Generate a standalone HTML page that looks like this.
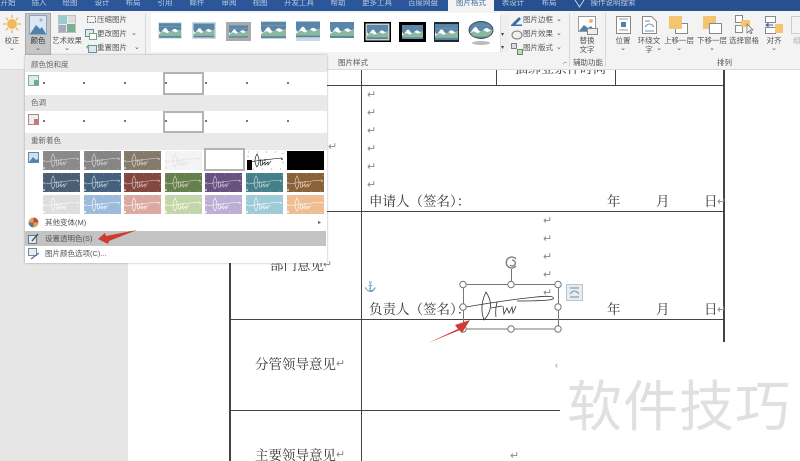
<!DOCTYPE html>
<html><head><meta charset="utf-8"><style>
html,body{margin:0;padding:0;width:800px;height:461px;overflow:hidden;background:#fff}
body{position:relative;font-family:"Liberation Sans","Noto Sans CJK SC",sans-serif;color:#444}
div,span,svg{position:absolute}
.t{white-space:nowrap;line-height:1;filter:blur(.3px)}
.tab{color:#b9c9e2;font-size:7.5px;line-height:1;top:-1.5px;white-space:nowrap;filter:blur(.3px);transform:translateX(-50%)}
.r{font-size:7.5px;color:#555;white-space:nowrap;line-height:1;filter:blur(.25px)}
.c{transform:translateX(-50%);text-align:center}
.ch{font-size:7px}
.doc{font-family:"Liberation Serif","Noto Serif CJK SC",serif;color:#333;font-size:13.5px;white-space:nowrap;line-height:1;filter:blur(.25px)}
.ret{font-size:11px;color:#888;line-height:1;white-space:nowrap}
.l{background:#444}
.th{width:37px;height:19px;overflow:hidden;filter:blur(.3px)}
.h{background:#e9e9e9;left:0;width:302px}
.dot{width:1.5px;height:1.5px;background:#777}
</style></head><body>
<svg width="0" height="0" style="left:0;top:0"><defs>
<symbol id="pic" viewBox="0 0 24 16"><rect width="24" height="16" fill="#fff"/><rect width="24" height="4" fill="#5a86a8"/><path d="M0 4h24v3q-3 2-5 0t-5 1-5-1-5 1-4-1z" fill="#5a86a8"/><path d="M0 12l5-3 4 2 5-3 4 2 6-3v8H0z" fill="#8db8a0"/><rect y="14" width="24" height="2" fill="#5a86a8"/></symbol>
<symbol id="sig" viewBox="0 0 37 19" preserveAspectRatio="none"><g fill="none" stroke="currentColor" stroke-width=".6"><path d="M2 11q12-2 33-4"/><path d="M10 3q-4 7 0 13 4-6 0-13zM14 8q-1 4 0 7M16 9l-1 5 3-3v3l3-3v3l3-4"/><path d="M1 1h35v17H1z" stroke-dasharray="1 8" opacity=".7"/></g><g fill="currentColor"><circle cx="1" cy="17" r="1"/><circle cx="1" cy="10" r=".8"/><circle cx="18" cy="9" r=".8"/><circle cx="35" cy="8" r=".8"/></g></symbol>
</defs></svg>

<!-- Document -->
<div style="left:0;top:70px;width:128px;height:391px;background:#e6e6e6"></div>
<div class="l" style="left:229px;top:70px;width:2px;height:391px"></div>
<div class="l" style="left:361px;top:70px;width:1px;height:391px"></div>
<div class="l" style="left:496px;top:70px;width:1px;height:15px"></div>
<div class="l" style="left:615px;top:70px;width:1px;height:15px"></div>
<div class="l" style="left:723px;top:70px;width:2px;height:272px"></div>
<div class="l" style="left:230px;top:85px;width:494px;height:1px"></div>
<div class="l" style="left:230px;top:211px;width:494px;height:1px"></div>
<div class="l" style="left:230px;top:319px;width:494px;height:1px"></div>
<div class="l" style="left:230px;top:410px;width:330px;height:1px"></div>

<div class="doc" style="left:515px;top:62px;font-size:13px">捆绑业条件时间</div>
<div style="left:128px;top:55px;width:672px;height:15px;background:#f3f3f3"></div>

<div class="ret" style="left:367px;top:90px">↵</div>
<div class="ret" style="left:367px;top:108px">↵</div>
<div class="ret" style="left:367px;top:126px">↵</div>
<div class="ret" style="left:367px;top:144px">↵</div>
<div class="ret" style="left:367px;top:162px">↵</div>
<div class="ret" style="left:367px;top:180px">↵</div>
<div class="ret" style="left:328px;top:142px">↵</div>
<div class="doc" style="left:369px;top:195px">申请人（签名）：</div>
<div class="doc" style="left:607px;top:195px">年</div>
<div class="doc" style="left:656px;top:195px">月</div>
<div class="doc" style="left:704px;top:195px">日<span class="ret" style="left:13px;top:2px">↵</span></div>

<div class="ret" style="left:543px;top:216px">↵</div>
<div class="ret" style="left:543px;top:234px">↵</div>
<div class="ret" style="left:543px;top:252px">↵</div>
<div class="ret" style="left:543px;top:270px">↵</div>
<div class="ret" style="left:543px;top:288px">↵</div>
<div class="doc" style="left:270px;top:259px">部门意见<span class="ret" style="left:53px;top:1px">↵</span></div>
<div class="t" style="left:364px;top:283px;font-size:10px;color:#3f6f9c">⚓</div>
<div class="doc" style="left:369px;top:303px">负责人（签名）：</div>
<div class="doc" style="left:607px;top:303px">年</div>
<div class="doc" style="left:656px;top:303px">月</div>
<div class="doc" style="left:704px;top:303px">日<span class="ret" style="left:13px;top:2px">↵</span></div>

<div class="doc" style="left:255px;top:358px">分管领导意见<span class="ret" style="left:81px;top:1px">↵</span></div>
<div class="doc" style="left:255px;top:449px">主要领导意见<span class="ret" style="left:81px;top:1px">↵</span></div>
<div class="ret" style="left:510px;top:451px">↵</div>

<!-- Watermark block -->
<div style="left:560px;top:345px;width:240px;height:116px;background:#fff"></div>
<div class="ret" style="left:555px;top:361px;font-size:9px">‹</div>
<div class="t" style="left:567px;top:375px;font-size:55px;letter-spacing:1px;color:#e0e0e0;font-family:'Noto Sans CJK SC',sans-serif;filter:none">软件技巧</div>

<!-- Selected picture -->
<svg style="left:455px;top:250px" width="130" height="90" viewBox="455 250 130 90">
<g fill="none" stroke="#777" stroke-width="1">
<rect x="463.5" y="284.5" width="95" height="44.500"/>
<path d="M511.5 284v-15"/>
<path d="M516 266a5.500 5.500 0 1 1 0-7M512 260a3 3 0 1 1-2 5" stroke-width="1.300"/>
</g>
<g fill="none" stroke="#333" stroke-width=".8">
<path d="M466 307q40-7 70-10 20-2 17 2-4 2-36 2"/>
<path d="M486 292q-7 14-2 28 12-13 2-28zM497 302q-2 8-1 15M491 308l11-2M503 306l1 8 3-6 2 5 3-6 1 6 3-7"/>
</g>
<g fill="#fff" stroke="#777" stroke-width="1">
<circle cx="463" cy="284.500" r="3.200"/><circle cx="511" cy="284.500" r="3.200"/><circle cx="558" cy="284.500" r="3.200"/>
<circle cx="463" cy="307" r="3.200"/><circle cx="558" cy="307" r="3.200"/>
<circle cx="463" cy="329" r="3.200"/><circle cx="511" cy="329" r="3.200"/><circle cx="558" cy="329" r="3.200"/>
</g></svg>
<div style="left:566px;top:284px;width:17px;height:17px;background:#e6edf2;border:1px solid #b9c6d2;box-sizing:border-box"></div>
<svg style="left:566px;top:284px" width="17" height="17"><path d="M4 4h9M4 13h9M4 10q4.500-6 9 0" fill="none" stroke="#6d8da8" stroke-width="1"/></svg>
<svg style="left:425px;top:320px" width="46" height="26"><path d="M3 23L33 9 30 5 45 0 37 13 35 10z" fill="#cf3b30"/></svg>

<!-- Tabs -->
<div style="left:0;top:0;width:800px;height:11px;background:#2b579a;overflow:hidden" id="tabs">
<div style="left:493px;top:0;width:307px;height:11px;background:#26508e"></div>
<div style="left:448px;top:0;width:46px;height:11px;background:#f3f3f3"></div>
<span class="tab" style="left:8px">开始</span><span class="tab" style="left:39px">插入</span><span class="tab" style="left:70px">绘图</span><span class="tab" style="left:102px">设计</span><span class="tab" style="left:133px">布局</span><span class="tab" style="left:165px">引用</span><span class="tab" style="left:197px">邮件</span><span class="tab" style="left:229px">审阅</span><span class="tab" style="left:260px">视图</span><span class="tab" style="left:299px">开发工具</span><span class="tab" style="left:338px">帮助</span><span class="tab" style="left:377px">更多工具</span><span class="tab" style="left:423px">百度网盘</span><span class="tab" style="left:471px;color:#446a9f">图片格式</span><span class="tab" style="left:513px">表设计</span><span class="tab" style="left:549px">布局</span><span class="tab" style="left:613px">操作说明搜索</span>
<svg style="left:574px;top:0" width="11" height="11"><path d="M1 0l4.500 7L10 0" fill="none" stroke="#c5d3e8" stroke-width="1"/></svg>
</div>

<!-- Ribbon -->
<div style="left:0;top:11px;width:800px;height:59px;background:#f3f3f3;border-bottom:1px solid #dcdcdc;box-sizing:border-box"></div>
<div style="left:25px;top:13px;width:26px;height:43px;background:#c6c6c6;border:1px solid #aaa;box-sizing:border-box"></div>
<svg style="left:3px;top:15px" width="18" height="18"><circle cx="9" cy="9" r="5" fill="#f4b65a"/><g stroke="#f4b65a" stroke-width="1.500"><path d="M9 0v3M9 15v3M0 9h3M15 9h3M3 3l2 2M13 13l2 2M3 15l2-2M13 5l2-2"/></g></svg>
<div class="r c" style="left:12px;top:36.500px">校正</div><div class="r c ch" style="left:12px;top:45px">⌄</div>
<svg style="left:29px;top:15px" width="18" height="20"><rect x=".5" y=".5" width="17" height="19" fill="#dbe8f2" stroke="#8aa7bf"/><path d="M1 19l6-9 4 4 2-2 4 7z" fill="#4e82ad"/><circle cx="12" cy="5" r="1.500" fill="#8fb7d6"/></svg>
<div class="r c" style="left:38px;top:36.500px;color:#333">颜色</div><div class="r c ch" style="left:38px;top:45px">⌄</div>
<svg style="left:58px;top:15px" width="18" height="18"><rect width="18" height="18" fill="#e8ecec" stroke="#999"/><rect x="1" y="1" width="8" height="8" fill="#9cc"/><rect x="9" y="9" width="8" height="8" fill="#7ab08e"/><rect x="1" y="10" width="7" height="7" fill="#aab"/><rect x="10" y="1" width="7" height="7" fill="#ddd"/></svg>
<div class="r c" style="left:67px;top:36.500px">艺术效果</div><div class="r c ch" style="left:67px;top:45px">⌄</div>
<svg style="left:86px;top:15px" width="11" height="9"><rect x="1.500" y="1.500" width="8" height="6" fill="none" stroke="#777" stroke-dasharray="2 1"/></svg>
<div class="r" style="left:97px;top:16px">压缩图片</div>
<svg style="left:85px;top:29px" width="12" height="11"><rect x=".5" y=".5" width="8" height="7" fill="#dde7ee" stroke="#789"/><rect x="4.500" y="4.500" width="7" height="6" fill="#fff" stroke="#6a8"/></svg>
<div class="r" style="left:97px;top:30px">更改图片<span class="ch" style="left:34px;top:0">⌄</span></div>
<svg style="left:85px;top:43px" width="12" height="11"><rect x="3.500" y="2.500" width="8" height="7" fill="#dde7ee" stroke="#789"/><path d="M1 4l3-3v6z" fill="#5b8"/></svg>
<div class="r" style="left:97px;top:44px">重置图片<span class="ch" style="left:37px;top:0">⌄</span></div>
<div style="left:145px;top:13px;width:1px;height:54px;background:#d8d8d8"></div>

<div style="left:151px;top:13px;width:349px;height:39px;background:#fff"></div>
<svg style="left:158px;top:22px" width="24" height="17"><rect width="24" height="17" fill="#d9e3ea"/><use href="#pic" x="1" y="1" width="22" height="15"/></svg>
<svg style="left:192px;top:22px" width="24" height="17"><rect width="24" height="17" fill="#cfdce6"/><use href="#pic" x="1.500" y="1.500" width="21" height="14"/></svg>
<svg style="left:226px;top:22px" width="25" height="19"><rect width="25" height="19" fill="#aaa"/><use href="#pic" x="3" y="3" width="19" height="13"/></svg>
<svg style="left:261px;top:21px" width="25" height="18"><use href="#pic" width="25" height="18"/></svg>
<svg style="left:296px;top:21px" width="24" height="20"><use href="#pic" width="24" height="17"/><rect y="17" width="24" height="3" fill="#c9d9e5"/></svg>
<svg style="left:330px;top:21px" width="24" height="18"><use href="#pic" width="24" height="18"/></svg>
<svg style="left:364px;top:22px" width="27" height="20"><rect width="27" height="20" fill="#000"/><rect x="1.500" y="1.500" width="24" height="17" fill="#ccc"/><use href="#pic" x="3" y="3" width="21" height="14"/></svg>
<svg style="left:399px;top:22px" width="27" height="20"><rect width="27" height="20" fill="#000"/><use href="#pic" x="3" y="3" width="21" height="14"/></svg>
<svg style="left:434px;top:22px" width="25" height="20"><rect width="25" height="20" fill="#1c2a36"/><use href="#pic" x="1" y="1" width="23" height="18"/></svg>
<svg style="left:468px;top:20px" width="26" height="26"><defs><clipPath id="o"><ellipse cx="13" cy="10" rx="12" ry="8.500"/></clipPath></defs><use href="#pic" width="26" height="20" clip-path="url(#o)"/><ellipse cx="13" cy="10" rx="12" ry="8.500" fill="none" stroke="#35505f" stroke-width="1"/><ellipse cx="13" cy="23" rx="9" ry="2" fill="#bbb"/></svg>
<div style="left:500px;top:15px;width:8px;height:37px;background:#efefef;border-left:1px solid #ddd"></div>
<div class="t" style="left:501px;top:32px;font-size:6px;color:#444">▾</div><div class="t" style="left:501px;top:45px;font-size:6px;color:#444">▾</div>

<svg style="left:511px;top:15px" width="12" height="11"><path d="M1 9l7-7 2 2-7 7z" fill="#3b6ea5"/><rect y="9.500" width="11" height="1.500" fill="#3b6ea5"/></svg>
<div class="r" style="left:523px;top:16px">图片边框<span class="ch" style="left:33px;top:0">⌄</span></div>
<svg style="left:511px;top:29px" width="12" height="11"><ellipse cx="6" cy="6" rx="5" ry="4" fill="#eee" stroke="#777"/></svg>
<div class="r" style="left:523px;top:30px">图片效果<span class="ch" style="left:33px;top:0">⌄</span></div>
<svg style="left:511px;top:43px" width="12" height="12"><rect x=".5" y=".5" width="5" height="5" fill="#dde" stroke="#688"/><rect x="6.500" y="6.500" width="5" height="5" fill="#bdb" stroke="#686"/></svg>
<div class="r" style="left:523px;top:44px">图片版式<span class="ch" style="left:33px;top:0">⌄</span></div>
<div class="r" style="left:338px;top:59px">图片样式</div>
<div class="t" style="left:563px;top:60px;font-size:7px;color:#777">⌐</div>
<div style="left:569px;top:13px;width:1px;height:54px;background:#d8d8d8"></div>

<svg style="left:578px;top:16px" width="20" height="19"><rect x=".5" y=".5" width="17" height="15" fill="#fff" stroke="#999"/><path d="M1 15l5-6 4 3 3-2 4 5z" fill="#4e82ad"/><circle cx="13" cy="5" r="2" fill="#f2b65a"/><rect x="9.500" y="12.500" width="10" height="6" fill="#eee" stroke="#888"/></svg>
<div class="r c" style="left:587px;top:37px">替换</div><div class="r c" style="left:587px;top:46px">文字</div>
<div class="r" style="left:573px;top:59px">辅助功能</div>
<div style="left:605px;top:13px;width:1px;height:54px;background:#d8d8d8"></div>

<svg style="left:616px;top:16px" width="15" height="18"><rect x=".5" y=".5" width="14" height="17" fill="#fff" stroke="#888"/><path d="M3 3h9M3 14h9" stroke="#999"/><rect x="5" y="6" width="5" height="5" fill="#4e82ad"/></svg>
<div class="r c" style="left:623px;top:37px">位置</div><div class="r c ch" style="left:623px;top:45px">⌄</div>
<svg style="left:642px;top:16px" width="15" height="18"><path d="M.5.5h9l5 5v12H.5z" fill="#fff" stroke="#888"/><path d="M3 5h5M3 15h9M3 11q4.500-6 9 0" fill="none" stroke="#6d8da8"/></svg>
<div class="r c" style="left:649px;top:37px">环绕文</div><div class="r c" style="left:649px;top:46px">字<span class="ch" style="left:11px;top:-1px">⌄</span></div>
<svg style="left:669px;top:16px" width="19" height="18"><rect x="6.500" y="7.500" width="12" height="10" fill="#fff" stroke="#888"/><rect width="13" height="13" fill="#f3c471"/></svg>
<div class="r c" style="left:679px;top:37px">上移一层</div><div class="r c ch" style="left:679px;top:45px">⌄</div>
<svg style="left:703px;top:16px" width="19" height="18"><rect width="13" height="13" fill="#f3c471"/><rect x="6.500" y="7.500" width="12" height="10" fill="#fff" stroke="#888"/></svg>
<div class="r c" style="left:712px;top:37px">下移一层</div><div class="r c ch" style="left:712px;top:45px">⌄</div>
<svg style="left:735px;top:15px" width="19" height="19"><rect x=".5" y=".5" width="7" height="7" fill="#fff" stroke="#888"/><rect x=".5" y="10.500" width="7" height="7" fill="#fff" stroke="#888"/><rect x="6" y="5" width="9" height="7" fill="#f3c471"/><path d="M12 9v9l2-2 2 3 1-1-2-3h3z" fill="#fff" stroke="#666" stroke-width=".7"/></svg>
<div class="r c" style="left:744px;top:37px">选择窗格</div>
<svg style="left:765px;top:16px" width="19" height="18"><rect x=".5" y=".5" width="10" height="6" fill="#fff" stroke="#888"/><rect x=".5" y="11.500" width="10" height="6" fill="#fff" stroke="#888"/><rect x="10" y="8" width="8" height="9" fill="#f3c471"/><path d="M3 9h5M3 7.500l-2 1.500 2 1.500z" stroke="#3b6ea5" fill="#3b6ea5"/></svg>
<div class="r c" style="left:774px;top:37px">对齐</div><div class="r c ch" style="left:774px;top:45px">⌄</div>
<svg style="left:791px;top:16px" width="9" height="18"><rect x=".5" y=".5" width="14" height="17" fill="none" stroke="#ccc"/></svg>
<div class="r" style="left:793px;top:37px;color:#aaa">组</div>
<div class="r" style="left:717px;top:59px">排列</div>

<!-- Color menu -->
<div style="left:25px;top:55px;width:302px;height:208px;background:#fff;box-shadow:0 0 2px rgba(0,0,0,.35)" id="m">
 <div class="h" style="top:0;height:17px"></div>
 <div class="r" style="left:6px;top:6px;color:#666">颜色饱和度</div>
 <div class="h" style="top:40px;height:16px"></div>
 <div class="r" style="left:6px;top:44px;color:#666">色调</div>
 <div class="h" style="top:78px;height:17px"></div>
 <div class="r" style="left:6px;top:82px;color:#666">重新着色</div>

 <svg style="left:3px;top:20px" width="11" height="11"><rect x=".5" y=".5" width="10" height="10" fill="#dfe9ee" stroke="#8aa"/><rect x="6" y="5" width="4" height="5" fill="#6a9"/></svg>
 <svg style="left:3px;top:59px" width="11" height="11"><rect x=".5" y=".5" width="10" height="10" fill="#eee" stroke="#a88"/><rect x="6" y="5" width="4" height="5" fill="#c77"/></svg>
 <svg style="left:3px;top:97px" width="11" height="11"><rect x=".5" y=".5" width="10" height="10" fill="#cfe0ee" stroke="#68a"/><path d="M1 10l4-5 3 3 2-1v3z" fill="#4e82ad"/></svg>

 <div style="left:138px;top:17px;width:41px;height:23px;border:2px solid #b3b3b3;box-sizing:border-box"></div>
 <div style="left:138px;top:56px;width:41px;height:22px;border:2px solid #b3b3b3;box-sizing:border-box"></div>

 <div class="dot" style="left:18px;top:27px"></div><div class="dot" style="left:58px;top:27px"></div><div class="dot" style="left:99px;top:27px"></div><div class="dot" style="left:140px;top:27px"></div><div class="dot" style="left:180px;top:27px"></div><div class="dot" style="left:221px;top:27px"></div><div class="dot" style="left:262px;top:27px"></div>
 <div class="dot" style="left:18px;top:65px"></div><div class="dot" style="left:58px;top:65px"></div><div class="dot" style="left:99px;top:65px"></div><div class="dot" style="left:140px;top:65px"></div><div class="dot" style="left:180px;top:65px"></div><div class="dot" style="left:221px;top:65px"></div><div class="dot" style="left:262px;top:65px"></div>

 <!-- row 1 -->
 <svg class="th" style="left:18px;top:96px;background:#8a8a8a;color:#ddd"><use href="#sig" width="37" height="19"/></svg>
 <svg class="th" style="left:59px;top:96px;background:#858585;color:#ddd"><use href="#sig" width="37" height="19"/></svg>
 <svg class="th" style="left:99px;top:96px;background:#85796a;color:#ddd"><use href="#sig" width="37" height="19"/></svg>
 <svg class="th" style="left:140px;top:96px;background:#f4f4f4;color:#ddd"><use href="#sig" width="37" height="19"/></svg>
 <div style="left:179px;top:93px;width:41px;height:23px;border:2px solid #b3b3b3;background:#fff;box-sizing:border-box"></div>
 <svg class="th" style="left:222px;top:96px;background:#fff;color:#000"><rect x="0" y="9" width="5" height="10" fill="#000"/><use href="#sig" width="37" height="19"/></svg>
 <div class="th" style="left:262px;top:96px;background:#000"></div>
 <!-- row 2 -->
 <svg class="th" style="left:18px;top:118px;background:#4b5e74;color:#cdd"><use href="#sig" width="37" height="19"/></svg>
 <svg class="th" style="left:59px;top:118px;background:#45607f;color:#cdd"><use href="#sig" width="37" height="19"/></svg>
 <svg class="th" style="left:99px;top:118px;background:#84473f;color:#dcc"><use href="#sig" width="37" height="19"/></svg>
 <svg class="th" style="left:140px;top:118px;background:#66804d;color:#ddc"><use href="#sig" width="37" height="19"/></svg>
 <svg class="th" style="left:180px;top:118px;background:#66527f;color:#dcd"><use href="#sig" width="37" height="19"/></svg>
 <svg class="th" style="left:221px;top:118px;background:#44808a;color:#cdd"><use href="#sig" width="37" height="19"/></svg>
 <svg class="th" style="left:262px;top:118px;background:#8a623a;color:#edc"><use href="#sig" width="37" height="19"/></svg>
 <!-- row 3 -->
 <svg class="th" style="left:18px;top:140px;background:#dedede;color:#fff"><use href="#sig" width="37" height="19"/></svg>
 <svg class="th" style="left:59px;top:140px;background:#9bbbdc;color:#fff"><use href="#sig" width="37" height="19"/></svg>
 <svg class="th" style="left:99px;top:140px;background:#dba9a2;color:#fff"><use href="#sig" width="37" height="19"/></svg>
 <svg class="th" style="left:140px;top:140px;background:#c3d6a8;color:#fff"><use href="#sig" width="37" height="19"/></svg>
 <svg class="th" style="left:180px;top:140px;background:#bcaed4;color:#fff"><use href="#sig" width="37" height="19"/></svg>
 <svg class="th" style="left:221px;top:140px;background:#9dcbd8;color:#fff"><use href="#sig" width="37" height="19"/></svg>
 <svg class="th" style="left:262px;top:140px;background:#eebd92;color:#fff"><use href="#sig" width="37" height="19"/></svg>

 <div style="left:0;top:176px;width:301px;height:15px;background:#c3c3c3"></div>
 <svg style="left:3px;top:162px" width="11" height="11"><circle cx="5.500" cy="5.500" r="5" fill="#e8a33d"/><path d="M5.500 5.500V.5a5 5 0 0 1 5 5z" fill="#c8473c"/><path d="M5.500 5.500H.5a5 5 0 0 0 5 5z" fill="#4b78ad"/></svg>
 <div class="r" style="left:20px;top:164px">其他变体(M)</div>
 <div class="t" style="left:293px;top:165px;font-size:6px;color:#555">▸</div>
 <svg style="left:3px;top:178px" width="11" height="11"><rect x=".5" y="2.500" width="8" height="8" fill="#dfe9ee" stroke="#678"/><path d="M4 8l6-7" stroke="#345" stroke-width="1.300"/></svg>
 <div class="r" style="left:20px;top:180px">设置透明色(S)</div>
 <svg style="left:3px;top:193px" width="12" height="12"><rect x=".5" y=".5" width="8" height="7" fill="#e9f0f3" stroke="#789"/><path d="M3 11l8-6" stroke="#4b78ad" stroke-width="1.300"/></svg>
 <div class="r" style="left:20px;top:195px">图片颜色选项(C)...</div>
</div>
<svg style="left:95px;top:226px" width="46" height="20"><path d="M3 13L10 7 11 10 42 4 14 15 13 18z" fill="#cf3b30"/></svg>
</body></html>
